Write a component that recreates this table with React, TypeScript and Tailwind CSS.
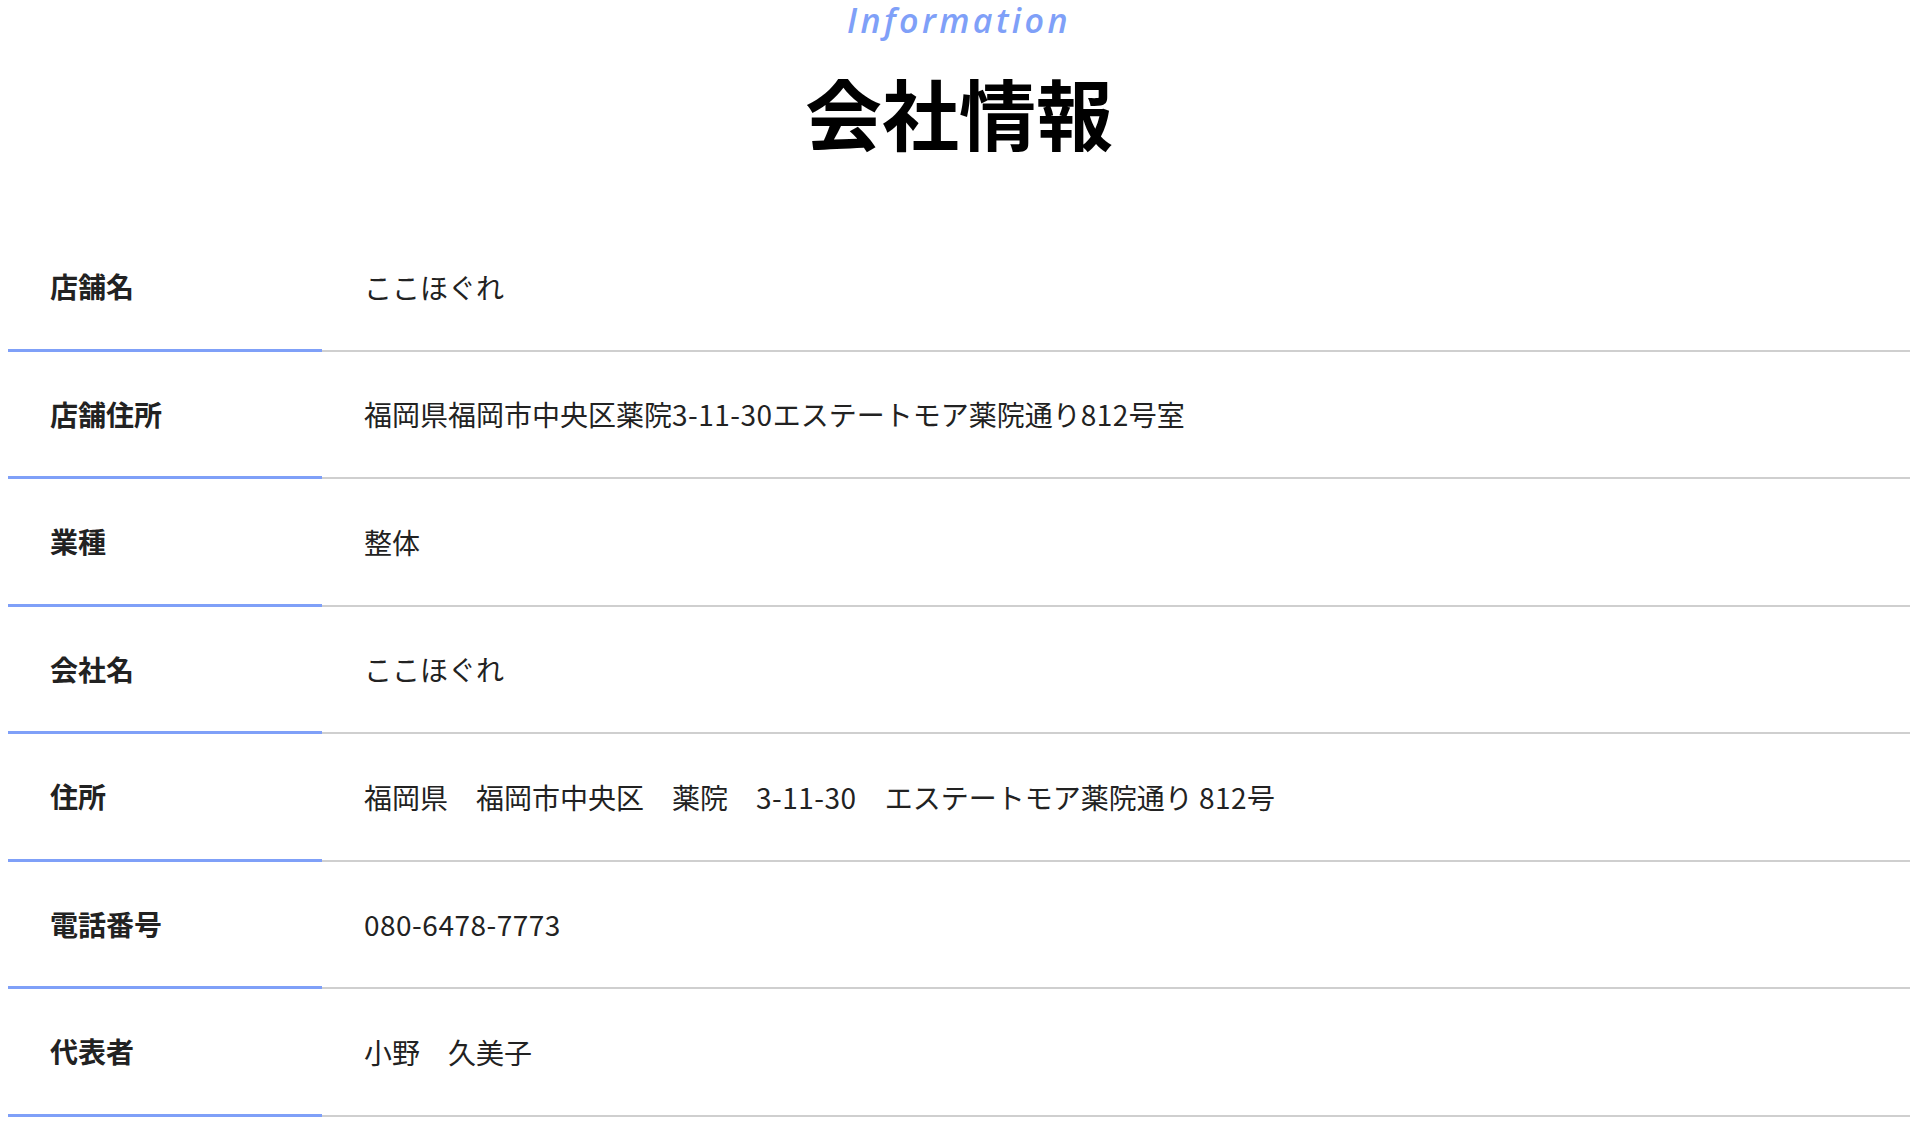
import React from "react";

const rows: { label: string; value: string }[] = [
  { label: "店舗名", value: "ここほぐれ" },
  { label: "店舗住所", value: "福岡県福岡市中央区薬院3-11-30エステートモア薬院通り812号室" },
  { label: "業種", value: "整体" },
  { label: "会社名", value: "ここほぐれ" },
  { label: "住所", value: "福岡県　福岡市中央区　薬院　3-11-30　エステートモア薬院通り 812号" },
  { label: "電話番号", value: "080-6478-7773" },
  { label: "代表者", value: "小野　久美子" },
];

function Value({ text }: { text: string }) {
  const parts = text.split(/([0-9\-]+)/);
  return (
    <>
      {parts.map((p, i) =>
        /^[0-9\-]+$/.test(p) ? (
          <span key={i} className="tracking-[0.5px]">
            {p}
          </span>
        ) : (
          <span key={i}>{p}</span>
        )
      )}
    </>
  );
}

export default function App() {
  return (
    <div className="w-[1920px] h-[1125px] overflow-hidden bg-white text-[#222]" style={{ fontFamily: '"Noto Sans CJK JP", "Noto Sans", sans-serif' }}>
      <section className="ml-[8px] w-[1902px] flex flex-col">
        <p
          className="text-center italic font-semibold text-[34px] leading-[40px] tracking-[0.1em] text-[#7fa0f8]"
          style={{ fontFamily: '"Open Sans", "Noto Sans", sans-serif' }}
        >
          Information
        </p>
        <h2 className="mt-[34px] text-center font-bold text-[77px] leading-[76px] text-black">会社情報</h2>
        <div className="mt-[74px] flex flex-col">
          {rows.map((r) => (
            <div key={r.label} className="flex h-[127.5px]">
              <div className="w-[314px] shrink-0 flex items-center pl-[42px] border-b-[3px] border-[#7fa0f8] font-bold text-[28px]">
                {r.label}
              </div>
              <div className="flex-1 flex items-center pl-[42px] border-b-2 border-[#cfcfcf] text-[28px]">
                <span>
                  <Value text={r.value} />
                </span>
              </div>
            </div>
          ))}
        </div>
      </section>
    </div>
  );
}
